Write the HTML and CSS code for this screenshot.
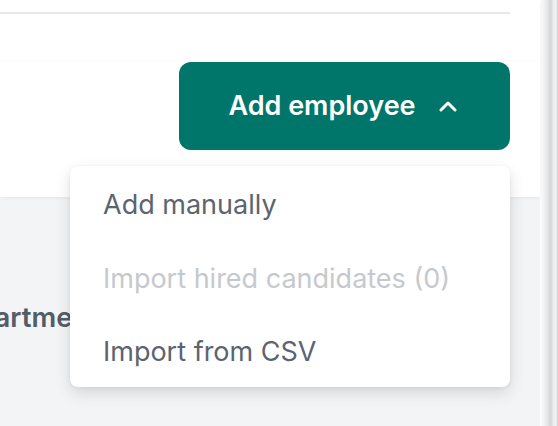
FILE: index.html
```
<!DOCTYPE html>
<html>
<head>
<meta charset="utf-8">
<link rel="stylesheet" href="styles.css">
</head>
<body>
<div class="page">
  <div class="main">
    <div class="top">
      <div class="rule"></div>
      <div class="toolbar">
        <button class="add-btn">
          <span>Add employee</span>
          <svg class="chev" width="18" height="12" viewBox="0 0 18 12"><polyline points="2,10 9,3 16,10" fill="none" stroke="#fff" stroke-width="3" stroke-linecap="round" stroke-linejoin="round"/></svg>
        </button>
      </div>
    </div>
    <div class="bottom">
      <div class="col-label">Department</div>
    </div>
  </div>
  <div class="edge"></div>
</div>
<div class="menu">
  <div class="menu-item">Add manually</div>
  <div class="menu-item disabled">Import hired candidates (0)</div>
  <div class="menu-item">Import from CSV</div>
</div>
</body>
</html>
```
FILE: styles.css
```
html, body {
  margin: 0;
  padding: 0;
}
body {
  width: 558px;
  height: 426px;
  overflow: hidden;
  font-family: Inter, "Noto Sans", sans-serif;
  position: relative;
  background: #f3f4f6;
}
.page {
  display: flex;
  height: 426px;
}
.main {
  flex: 1;
  display: flex;
  flex-direction: column;
}
.top {
  background: #fff;
  height: 197px;
  box-shadow: 0 1px 4px rgba(0,0,0,0.06);
  position: relative;
  z-index: 1;
}
.rule {
  margin-top: 12px;
  width: 510px;
  height: 2px;
  background: #e5e7eb;
}
.toolbar {
  margin-top: 46px;
  border-top: 1px solid #fafafa;
  padding-top: 1px;
  padding-right: 30px;
  display: flex;
  justify-content: flex-end;
}
.add-btn {
  width: 331px;
  height: 88px;
  border: none;
  border-radius: 12px;
  background: #00766a;
  color: #fff;
  font-family: Inter, "Noto Sans", sans-serif;
  font-size: 27px;
  font-weight: 600;
  display: flex;
  align-items: center;
  justify-content: center;
  gap: 23px;
  padding: 0 4px 2px 0;
}
.chev {
  margin-top: 1px;
}
.bottom {
  flex: 1;
  background: #f3f4f6;
  padding-top: 103px;
}
.col-label {
  margin-left: -59px;
  font-size: 27.5px;
  font-weight: 600;
  color: #545c66;
}
.edge {
  width: 18px;
  background: linear-gradient(to right, #ffffff 0%, #e4e6e8 40%, #d4d6d9 60%, #eceded 75%, #f2f2f3 90%, #c8cacd 100%);
}
.menu {
  position: absolute;
  left: 70px;
  top: 166px;
  width: 440px;
  height: 221px;
  background: #fff;
  border-radius: 8px;
  box-shadow: 0 6px 16px rgba(0,0,0,0.12), 0 1px 4px rgba(0,0,0,0.06);
  z-index: 2;
  padding-top: 2px;
  box-sizing: border-box;
}
.menu-item {
  height: 73.5px;
  display: flex;
  align-items: center;
  padding-left: 33px;
  font-size: 27px;
  color: #5b6470;
}
.menu-item.disabled {
  color: #c5c9ce;
}
```
